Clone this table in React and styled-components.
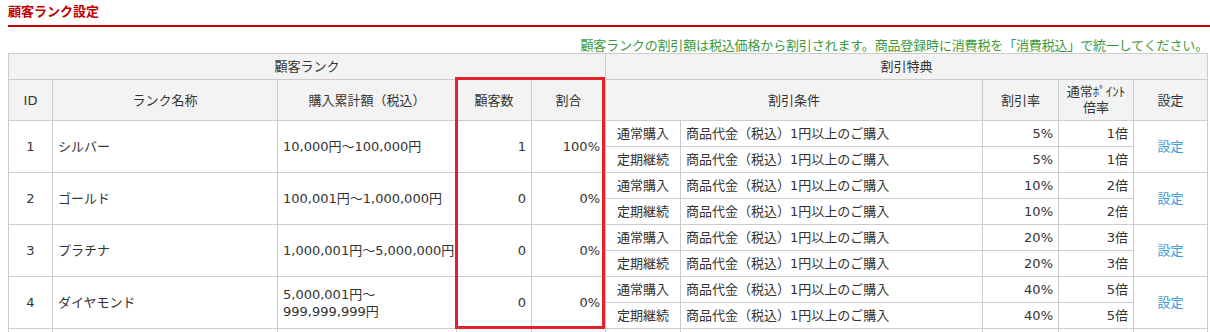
import React from "react";
import styled, { createGlobalStyle } from "styled-components";

const GlobalStyle = createGlobalStyle`
  html, body {
    margin: 0;
    padding: 0;
    overflow: hidden;
    background: #fff;
  }
  body {
    font-family: "DejaVu Sans", "Noto Sans CJK JP", sans-serif;
    font-size: 13px;
    color: #333;
  }
`;

const Page = styled.div`
  width: 1200px;
  padding: 0 0 0 8px;
`;

const Title = styled.h2`
  margin: 0 -30px 0 0;
  padding: 2px 0 5px;
  font-family: "Noto Sans CJK JP", sans-serif;
  font-size: 13px;
  line-height: 18px;
  font-weight: bold;
  color: #c40000;
  border-bottom: 2px solid #c40000;
`;

const Note = styled.p`
  margin: 9px 0 0;
  text-align: right;
  color: #3a9a3a;
  line-height: 17px;
  letter-spacing: -0.15px;
  font-family: "Noto Sans CJK JP", sans-serif;
`;

const TableWrap = styled.div`
  position: relative;
`;

const Table = styled.table`
  width: 1200px;
  border-collapse: collapse;
  table-layout: fixed;
`;

const Col = styled.col`
  width: ${(p) => p.$w}px;
`;

const Th = styled.th`
  background: #f2f3f2;
  border: 1px solid #ccc;
  font-weight: normal;
  padding: 4px 5px;
  line-height: ${(p) => p.$lh || 17}px;
  text-align: center;
  vertical-align: middle;
  color: #333;
`;

const Td = styled.td`
  border: 1px solid #ccc;
  padding: 4px 5px;
  height: 17px;
  line-height: 17px;
  text-align: ${(p) => p.$align || "left"};
  vertical-align: middle;
  color: #333;
`;

const AmountLine = styled.span`
  white-space: nowrap;
`;

const SettingLink = styled.a`
  color: #3d9bd5;
  text-decoration: none;
  cursor: pointer;
`;

const Highlight = styled.div`
  position: absolute;
  left: 447px;
  top: 24px;
  width: 150px;
  height: 252px;
  box-sizing: border-box;
  border: 3px solid #e8202a;
  pointer-events: none;
`;

const COLS = [44, 225, 179, 75, 74, 75, 302, 76, 75, 74];

const CONDITION = "商品代金（税込）1円以上のご購入";

const RANKS = [
  { id: 1, name: "シルバー", amount: ["10,000円～100,000円"], count: 1, ratio: "100%", rate: "5%", point: "1倍" },
  { id: 2, name: "ゴールド", amount: ["100,001円～1,000,000円"], count: 0, ratio: "0%", rate: "10%", point: "2倍" },
  { id: 3, name: "プラチナ", amount: ["1,000,001円～5,000,000円"], count: 0, ratio: "0%", rate: "20%", point: "3倍" },
  { id: 4, name: "ダイヤモンド", amount: ["5,000,001円～", "999,999,999円"], count: 0, ratio: "0%", rate: "40%", point: "5倍" },
];

function RankRows({ rank }) {
  return (
    <>
      <tr>
        <Td rowSpan={2} $align="center">{rank.id}</Td>
        <Td rowSpan={2}>{rank.name}</Td>
        <Td rowSpan={2}>
          {rank.amount.map((line, i) => (
            <React.Fragment key={i}>
              {i > 0 && <br />}
              <AmountLine>{line}</AmountLine>
            </React.Fragment>
          ))}
        </Td>
        <Td rowSpan={2} $align="right">{rank.count}</Td>
        <Td rowSpan={2} $align="right">{rank.ratio}</Td>
        <Td $align="center">通常購入</Td>
        <Td>{CONDITION}</Td>
        <Td $align="right">{rank.rate}</Td>
        <Td $align="right">{rank.point}</Td>
        <Td rowSpan={2} $align="center">
          <SettingLink>設定</SettingLink>
        </Td>
      </tr>
      <tr>
        <Td $align="center">定期継続</Td>
        <Td>{CONDITION}</Td>
        <Td $align="right">{rank.rate}</Td>
        <Td $align="right">{rank.point}</Td>
      </tr>
    </>
  );
}

function EmptyRows() {
  return (
    <>
      <tr>
        <Td rowSpan={2} />
        <Td rowSpan={2} />
        <Td rowSpan={2} />
        <Td rowSpan={2} />
        <Td rowSpan={2} />
        <Td />
        <Td />
        <Td />
        <Td />
        <Td rowSpan={2} />
      </tr>
      <tr>
        <Td />
        <Td />
        <Td />
        <Td />
      </tr>
    </>
  );
}

export default function App() {
  return (
    <>
      <GlobalStyle />
      <Page>
        <Title>顧客ランク設定</Title>
        <Note>
          顧客ランクの割引額は税込価格から割引されます。商品登録時に消費税を「消費税込」で統一してください。
        </Note>
        <TableWrap>
          <Table>
            <colgroup>
              {COLS.map((w, i) => (
                <Col key={i} $w={w} />
              ))}
            </colgroup>
            <thead>
              <tr>
                <Th colSpan={5}>顧客ランク</Th>
                <Th colSpan={5}>割引特典</Th>
              </tr>
              <tr>
                <Th>ID</Th>
                <Th>ランク名称</Th>
                <Th>購入累計額（税込）</Th>
                <Th>顧客数</Th>
                <Th>割合</Th>
                <Th colSpan={2}>割引条件</Th>
                <Th>割引率</Th>
                <Th $lh={16}>
                  通常ﾎﾟｲﾝﾄ
                  <br />
                  倍率
                </Th>
                <Th>設定</Th>
              </tr>
            </thead>
            <tbody>
              {RANKS.map((r) => (
                <RankRows key={r.id} rank={r} />
              ))}
              <EmptyRows />
            </tbody>
          </Table>
          <Highlight />
        </TableWrap>
      </Page>
    </>
  );
}
